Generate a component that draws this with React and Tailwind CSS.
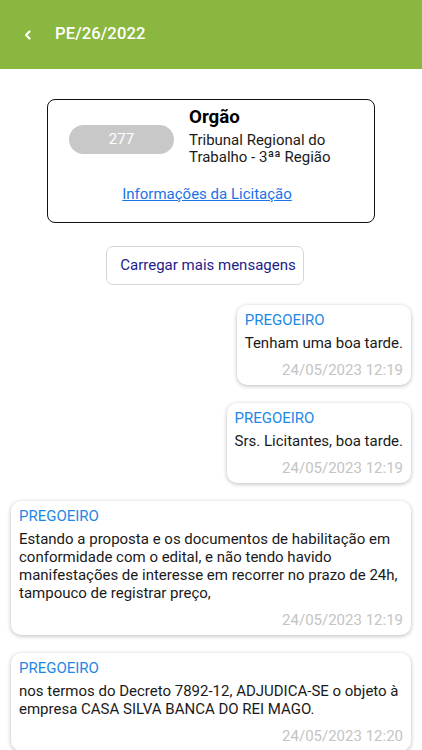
import React from 'react';

const messages = [
  { id: 1, text: 'Tenham uma boa tarde.', date: '24/05/2023 12:19' },
  { id: 2, text: 'Srs. Licitantes, boa tarde.', date: '24/05/2023 12:19' },
  {
    id: 3,
    text: 'Estando a proposta e os documentos de habilitação em conformidade com o edital, e não tendo havido manifestações de interesse em recorrer no prazo de 24h, tampouco de registrar preço,',
    date: '24/05/2023 12:19',
  },
  {
    id: 4,
    text: 'nos termos do Decreto 7892-12, ADJUDICA-SE o objeto à empresa CASA SILVA BANCA DO REI MAGO.',
    date: '24/05/2023 12:20',
  },
];

const Bubble = ({ msg }) => (
  <div className="max-w-[400px] rounded-[10px] bg-white px-2 pt-[6px] pb-[5px] shadow-[0_1px_4px_rgba(0,0,0,0.28)]">
    <div className="text-[15px] leading-[19px] text-[#1e88e5]">PREGOEIRO</div>
    <div className="mt-[4px] text-[15px] leading-[18px] text-[#1a1a1a]">{msg.text}</div>
    <div className="mt-[9px] text-right text-[15px] leading-[19px] text-[#c4c4c4]">{msg.date}</div>
  </div>
);

const App = () => {
  return (
    <div className="min-h-[750px] bg-white font-['Roboto','Liberation_Sans',sans-serif]">
      <header className="flex h-[69px] items-center bg-[#8ab73f] pl-[22px] text-white">
        <svg className="h-[12px] w-[12px]" viewBox="0 0 12 12" fill="none" stroke="currentColor" strokeWidth={2.2} strokeLinecap="round" strokeLinejoin="round">
          <path d="M7.5 2.5 L4 6 L7.5 9.5" />
        </svg>
        <h1 className="ml-[21px] text-[16.6px] font-medium tracking-[0.1px]">PE/26/2022</h1>
      </header>

      <div className="flex flex-col items-center pt-[30px]">
        <div className="w-[328px] rounded-[8px] border-[1.5px] border-[#111] pt-[4px] pb-[16px]">
          <div className="flex items-center">
            <div className="ml-[21px] mt-[9px] flex h-[29px] w-[105px] items-center justify-center rounded-full bg-[#c8c8c8] text-[15px] text-white">
              277
            </div>
            <div className="ml-[15px]">
              <div className="text-[18.7px] font-bold leading-[26px] text-black">Orgão</div>
              <div className="mt-[2px] text-[15px] leading-[17px] text-[#1a1a1a]">
                Tribunal Regional do
                <br />
                Trabalho - 3ªª Região
              </div>
            </div>
          </div>
          <div className="mt-[16px] pr-[8px] text-center">
            <a className="text-[15px] leading-[18px] text-[#1a73e8] underline" href="#">
              Informações da Licitação
            </a>
          </div>
        </div>

        <button className="mt-[23px] mr-[12px] h-[39px] w-[198px] rounded-[7px] border border-[#d6d6d6] bg-white pl-[6px] text-[15px] text-[#1c1c8a]">
          Carregar mais mensagens
        </button>
      </div>

      <div className="mt-[20px] flex flex-col items-end gap-[18px] pl-[11px] pr-[11px]">
        {messages.map((m) => (
          <Bubble key={m.id} msg={m} />
        ))}
      </div>
    </div>
  );
};

export default App;
